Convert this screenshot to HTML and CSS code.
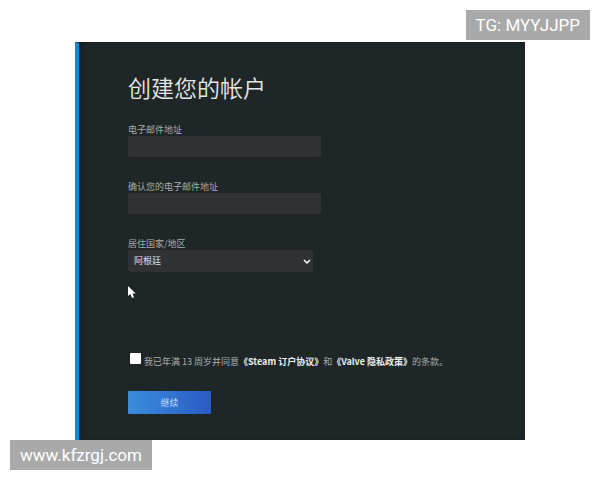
FILE: index.html
```html
<!DOCTYPE html>
<html lang="zh-CN">
<head>
  <meta charset="UTF-8">
  <title>创建您的帐户</title>
  <link rel="stylesheet" href="styles.css">
</head>
<body>

  <main class="panel">
    <h1>创建您的帐户</h1>
    <form class="signup">
      <div class="field">
        <label for="email">电子邮件地址</label>
        <input type="email" id="email">
      </div>
      <div class="field">
        <label for="confirmEmail">确认您的电子邮件地址</label>
        <input type="email" id="confirmEmail">
      </div>
      <div class="field">
        <label for="country">居住国家/地区</label>
        <div class="select-box">
          <select id="country">
            <option>阿根廷</option>
          </select>
          <svg class="arrow" viewBox="0 0 8 6"><path d="M1 1 L4 4 L7 1"/></svg>
        </div>
      </div>
      <div class="agree">
        <input type="checkbox" id="agree">
        <label for="agree">我已年满 13 周岁并同意<a href="#">《Steam 订户协议》</a>和<a href="#">《Valve 隐私政策》</a>的条款。</label>
      </div>
      <button type="submit">继续</button>
    </form>
    <svg class="cursor" viewBox="0 0 8 12"><path d="M0 0 V10 L2.4 8 L4 12 L6 11.200 L4.400 7.400 H7.600 Z"/></svg>
  </main>

  <div class="tag tag-top">TG: MYYJJPP</div>
  <div class="tag tag-bottom">www.kfzrgj.com</div>

</body>
</html>
```
FILE: styles.css
```css
* {
  box-sizing: border-box;
}
body {
  margin: 0;
  padding: 42px 75px 40px;
  background: #fff;
  font-family: "Noto Sans CJK SC", sans-serif;
}
.panel {
  position: relative;
  padding: 28px 48px 26px 49px;
  background: #1f2627;
  border-left: 4px solid #1787c9;
  border-top: 1px solid #17201f;
  box-shadow: inset 4px 0 3px #14222c;
}
h1 {
  margin: 0 0 21px;
  font-size: 23px;
  line-height: 32px;
  font-weight: 350;
  color: #e3e6e7;
}
.signup {
  color: #a9adae;
  font-size: 9px;
  line-height: 12px;
}
.field {
  margin-bottom: 24px;
}
.field label {
  display: block;
}
.field input {
  display: block;
  width: 193px;
  height: 21px;
  padding: 0 6px;
  border: none;
  border-radius: 2px;
  background: #303336;
  color: #e3e6e7;
  font: inherit;
}
.select-box {
  position: relative;
  width: 185px;
}
select {
  appearance: none;
  display: block;
  width: 100%;
  height: 22px;
  padding: 0 6px;
  border: none;
  border-radius: 2px;
  background: #303336;
  color: #dfe1e2;
  font: inherit;
}
.arrow {
  position: absolute;
  right: 2px;
  top: 9px;
  width: 8px;
  height: 6px;
  fill: none;
  stroke: #fff;
  stroke-width: 1.5;
}
.agree {
  display: flex;
  align-items: flex-start;
  gap: 3px;
  margin: 81px 0 23px 2px;
}
.agree input {
  appearance: none;
  flex: none;
  width: 11px;
  height: 11px;
  margin: 0;
  border-radius: 1px;
  background: #fff;
}
.agree label {
  padding-top: 3px;
  white-space: nowrap;
}
.agree a {
  color: #eceeef;
  font-weight: 700;
  text-decoration: none;
}
button {
  display: block;
  width: 83px;
  height: 23px;
  padding: 0;
  border: none;
  border-radius: 1px;
  background: linear-gradient(90deg, #3a8ddd, #2a5cc4);
  color: #c4dcf5;
  font: inherit;
}
.cursor {
  position: absolute;
  left: 49px;
  top: 243px;
  width: 8px;
  height: 12px;
  fill: #fff;
}
.tag {
  position: absolute;
  padding: 0 10px;
  background: #a9a9a9;
  color: #fff;
  font-family: Roboto, sans-serif;
  font-size: 17px;
  line-height: 30px;
}
.tag-top {
  top: 10px;
  right: 10px;
}
.tag-bottom {
  left: 10px;
  bottom: 10px;
}
```
